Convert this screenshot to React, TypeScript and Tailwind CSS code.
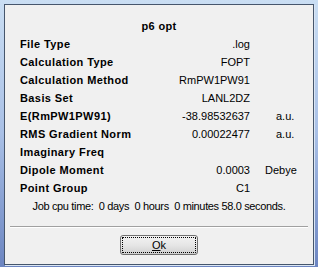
import React from "react";

const rows: { label: string; value: string; unit?: string; unitPad?: string }[] = [
  { label: "File Type", value: ".log" },
  { label: "Calculation Type", value: "FOPT" },
  { label: "Calculation Method", value: "RmPW1PW91" },
  { label: "Basis Set", value: "LANL2DZ" },
  { label: "E(RmPW1PW91)", value: "-38.98532637", unit: "a.u.", unitPad: "pl-[26px]" },
  { label: "RMS Gradient Norm", value: "0.00022477", unit: "a.u.", unitPad: "pl-[26px]" },
  { label: "Imaginary Freq", value: "" },
  { label: "Dipole Moment", value: "0.0003", unit: "Debye", unitPad: "pl-[15px]" },
  { label: "Point Group", value: "C1" },
];

export default function App() {
  return (
    <div
      className="w-[318px] h-[267px] pt-[4px] pl-[4px] pr-[4px] pb-[2px] bg-gradient-to-b from-[#cadef3] via-[#a9c0e6] to-[#6c85c1]"
      style={{ fontFamily: '"Liberation Sans", Arial, sans-serif' }}
    >
      <div className="h-full w-full border border-[#46566c] shadow-[1px_1px_0_#dbe6f4] bg-[#f0f0f0] text-[11px] text-black flex flex-col">
        <div className="pt-[13px] h-[30px] leading-[17px] font-bold text-center tracking-[0.3px]">p6 opt</div>
        <div className="flex flex-col pl-[15px]">
          {rows.map((r) => (
            <div key={r.label} className="grid grid-cols-[130px_100px_1fr] h-[18px] leading-[18px]">
              <span className="font-bold tracking-[0.4px] whitespace-nowrap">{r.label}</span>
              <span className="text-right whitespace-nowrap">{r.value}</span>
              <span className={`${r.unitPad ?? ""} whitespace-nowrap`}>{r.unit ?? ""}</span>
            </div>
          ))}
        </div>
        <div className="h-[18px] leading-[18px] text-center whitespace-pre tracking-[-0.35px]">
          {"Job cpu time:  0 days  0 hours  0 minutes 58.0 seconds."}
        </div>
        <div className="mx-[5px] mt-[11px] border-t border-[#a0a0a0] border-b border-b-white" />
        <div className="flex justify-center mt-[7px]">
          <button className="w-[78px] h-[20px] rounded-[3px] border border-[#707070] bg-gradient-to-b from-[#f2f2f2] via-[#e6e6e6] to-[#d0d0d0] p-[1px]">
            <div className="h-full w-full border border-dotted border-black rounded-[1px] flex items-center justify-center leading-none">
              <span className="underline">O</span>
              <span>k</span>
            </div>
          </button>
        </div>
      </div>
    </div>
  );
}
